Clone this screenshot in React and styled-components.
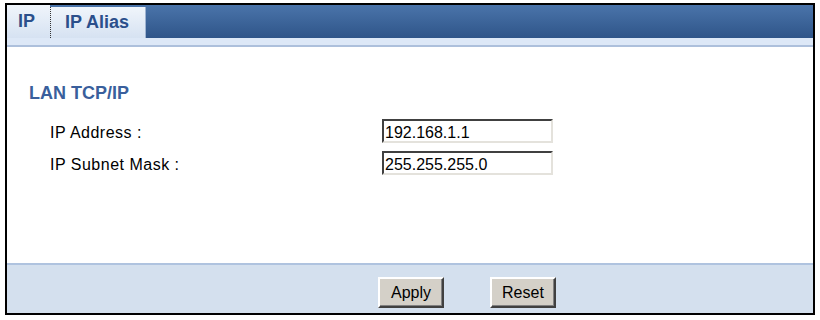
import React from 'react';
import styled, { createGlobalStyle } from 'styled-components';

const GlobalStyle = createGlobalStyle`
  html, body {
    margin: 0;
    padding: 0;
    background: #ffffff;
  }
  body {
    font-family: "Liberation Sans", Arial, sans-serif;
  }
`;

const Page = styled.div`
  padding: 3px 5px;
`;

const Frame = styled.div`
  width: 806px;
  height: 308px;
  border: 2px solid #000;
  display: flex;
  flex-direction: column;
  background: #fff;
`;

const TabBar = styled.div`
  display: flex;
  height: 33px;
  background: linear-gradient(#4a74aa, #2f5589);
`;

const Tab = styled.div`
  width: ${p => p.width}px;
  margin-top: ${p => (p.active ? 0 : 2)}px;
  padding-left: ${p => p.pad}px;
  box-sizing: border-box;
  display: flex;
  align-items: center;
  font-size: 18px;
  font-weight: bold;
  color: #2b4f8b;
  background: linear-gradient(#f0f5fb, #d6e2f2);
  border-left: ${p => (p.active ? 'none' : '1px dotted #333')};
  border-right: ${p => (p.active ? 'none' : '1px solid #9fb4d2')};
`;

const TabStrip = styled.div`
  height: 7px;
  background: #dde8f7;
  border-bottom: 2px solid #adc0dc;
`;

const Content = styled.div`
  flex: 1;
  padding: 36px 0 0 22px;
`;

const Heading = styled.div`
  font-size: 18px;
  font-weight: bold;
  line-height: 20px;
  color: #3a5f9c;
  margin-bottom: 16px;
`;

const Rows = styled.div`
  display: flex;
  flex-direction: column;
  gap: 8px;
  padding-left: 21px;
`;

const Row = styled.div`
  display: flex;
  align-items: baseline;
`;

const Label = styled.span`
  width: 332px;
  font-size: 16px;
  letter-spacing: 0.5px;
  color: #000;
`;

const Field = styled.input`
  width: 171px;
  height: 24px;
  box-sizing: border-box;
  padding: 3px 1px 0;
  font-family: "Liberation Sans", Arial, sans-serif;
  font-size: 16px;
  color: #000;
  background: #fff;
  border: 2px solid;
  border-color: #404040 #e4e2dc #e4e2dc #404040;
  outline: none;
`;

const Footer = styled.div`
  height: 36px;
  border-top: 2px solid #afc3df;
  background: #d4e0ee;
  display: flex;
  align-items: flex-start;
  gap: 46px;
  padding: 12px 0 0 371px;
  box-sizing: content-box;
`;

const Button = styled.button`
  height: 31px;
  padding: 0 ${p => p.pad}px;
  font-family: "Liberation Sans", Arial, sans-serif;
  font-size: 16px;
  color: #000;
  background: #d4d0c8;
  border: 2px solid;
  border-color: #ffffff #404040 #404040 #ffffff;
  box-shadow: inset -1px -1px 0 #808080;
  cursor: pointer;
`;

export default function App() {
  return (
    <Page>
      <GlobalStyle />
      <Frame>
        <TabBar>
          <Tab active width={43} pad={11}>IP</Tab>
          <Tab width={96} pad={14}>IP Alias</Tab>
        </TabBar>
        <TabStrip />
        <Content>
          <Heading>LAN TCP/IP</Heading>
          <Rows>
            <Row>
              <Label>IP Address :</Label>
              <Field defaultValue="192.168.1.1" />
            </Row>
            <Row>
              <Label>IP Subnet Mask :</Label>
              <Field defaultValue="255.255.255.0" />
            </Row>
          </Rows>
        </Content>
        <Footer>
          <Button pad={11}>Apply</Button>
          <Button pad={10}>Reset</Button>
        </Footer>
      </Frame>
    </Page>
  );
}
